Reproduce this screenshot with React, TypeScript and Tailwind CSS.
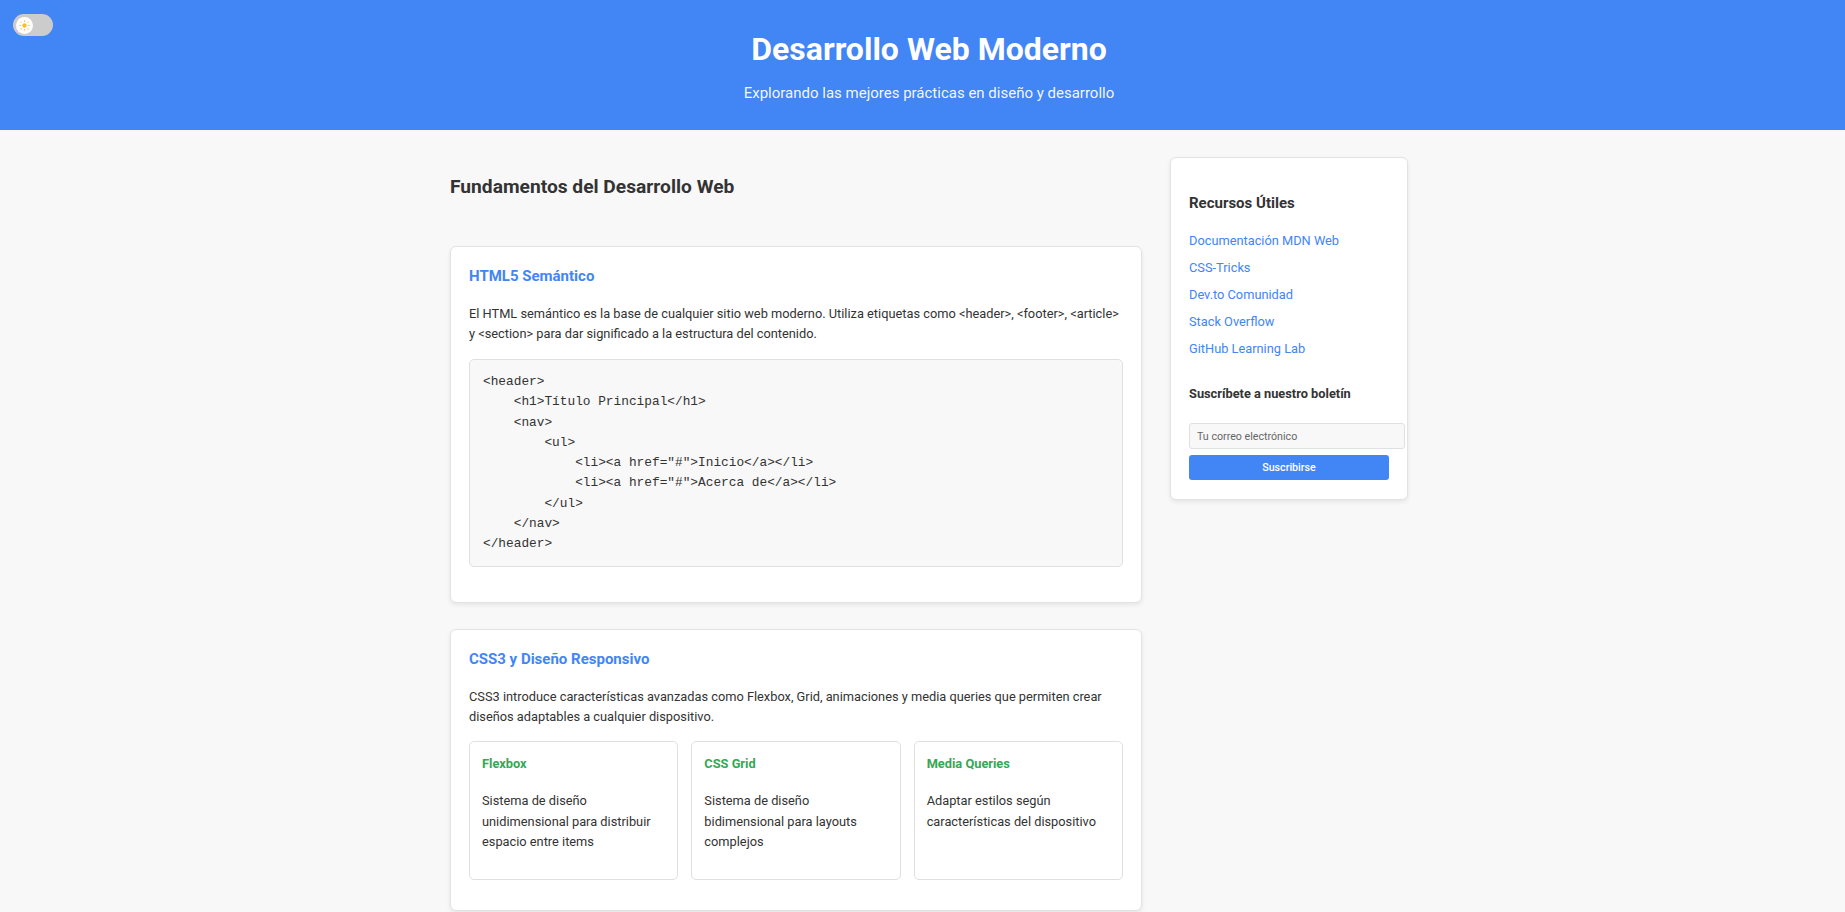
const codeSample = `<header>
    <h1>Título Principal</h1>
    <nav>
        <ul>
            <li><a href="#">Inicio</a></li>
            <li><a href="#">Acerca de</a></li>
        </ul>
    </nav>
</header>`

const features = [
	{ title: 'Flexbox', text: 'Sistema de diseño unidimensional para distribuir espacio entre items' },
	{ title: 'CSS Grid', text: 'Sistema de diseño bidimensional para layouts complejos' },
	{ title: 'Media Queries', text: 'Adaptar estilos según características del dispositivo' },
]

const links = ['Documentación MDN Web', 'CSS-Tricks', 'Dev.to Comunidad', 'Stack Overflow', 'GitHub Learning Lab']

function SunIcon() {
	return (
		<svg viewBox="0 0 12 12" className="w-[11px] h-[11px]" fill="#f6c21c">
			<circle cx="6" cy="6" r="2.4" />
			<rect x="5.4" y="0.3" width="1.2" height="2" rx="0.5" />
			<rect x="5.4" y="9.7" width="1.2" height="2" rx="0.5" />
			<rect x="0.3" y="5.4" width="2" height="1.2" rx="0.5" />
			<rect x="9.7" y="5.4" width="2" height="1.2" rx="0.5" />
			<circle cx="2.2" cy="2.2" r="0.7" />
			<circle cx="9.8" cy="2.2" r="0.7" />
			<circle cx="2.2" cy="9.8" r="0.7" />
			<circle cx="9.8" cy="9.8" r="0.7" />
		</svg>
	)
}

function ThemeToggle() {
	return (
		<button
			type="button"
			className="absolute top-[14px] left-[13px] w-[40px] h-[22px] rounded-full bg-[#cccccc] flex items-center pl-[3px]"
		>
			<span className="w-[17px] h-[17px] rounded-full bg-white flex items-center justify-center">
				<SunIcon />
			</span>
		</button>
	)
}

function Card({ children, className = '' }: { children: React.ReactNode, className?: string }) {
	return (
		<article className={`bg-white border border-[#e3e3e3] rounded-[6px] shadow-[0_2px_4px_rgba(0,0,0,0.08)] px-[18px] ${className}`}>
			{ children }
		</article>
	)
}

export default function App() {
	return (
		<div className="min-h-screen bg-[#f8f8f8] text-[#333] font-['Roboto','Liberation_Sans',sans-serif]">
			<header className="relative bg-[#4285f4] h-[130px] flex flex-col items-center pl-[13px] text-white">
				<ThemeToggle />
				<h1 className="mt-[29px] text-[32px] leading-[40px] font-bold">Desarrollo Web Moderno</h1>
				<p className="mt-[12px] text-[15px] leading-[24px] text-white/95">Explorando las mejores prácticas en diseño y desarrollo</p>
			</header>

			<div className="mx-auto w-[971px] pl-[13px] flex items-start gap-[28px]">
				<main className="w-[692px] shrink-0">
					<h2 className="mt-[42px] text-[19.2px] leading-[30px] font-bold">Fundamentos del Desarrollo Web</h2>

					<Card className="mt-[44px] pt-[17px] pb-[22px]">
						<h3 className="text-[15px] leading-[24px] font-bold text-[#4285f4]">HTML5 Semántico</h3>
						<p className="mt-[16px] text-[12.8px] leading-[20px]">
							El HTML semántico es la base de cualquier sitio web moderno. Utiliza etiquetas como &lt;header&gt;, &lt;footer&gt;, &lt;article&gt; y &lt;section&gt; para dar significado a la estructura del contenido.
						</p>
						<pre className="mt-[15px] mb-[13px] bg-[#f8f8f8] border border-[#e0e0e0] rounded-[5px] px-[13px] py-[12px] font-['Liberation_Mono','Courier_New',monospace] text-[12.8px] leading-[20.25px] text-[#333]">{ codeSample }</pre>
					</Card>

					<Card className="mt-[26px] pt-[17px] pb-[30px]">
						<h3 className="text-[15px] leading-[24px] font-bold text-[#4285f4]">CSS3 y Diseño Responsivo</h3>
						<p className="mt-[16px] text-[12.8px] leading-[20px]">
							CSS3 introduce características avanzadas como Flexbox, Grid, animaciones y media queries que permiten crear diseños adaptables a cualquier dispositivo.
						</p>
						<div className="mt-[14px] grid grid-cols-3 gap-[13px]">
							{
								features.map((feature) => (
									<div key={feature.title} className="border border-[#e0e0e0] rounded-[5px] px-[12px] pt-[12px] pb-[14px]">
										<h4 className="text-[12.8px] leading-[20px] font-bold text-[#34a853]">{ feature.title }</h4>
										<p className="mt-[17px] mb-[12px] text-[12.8px] leading-[20.5px]">{ feature.text }</p>
									</div>
								))
							}
						</div>
					</Card>
				</main>

				<aside className="w-[238px] shrink-0 mt-[27px] bg-white border border-[#e3e3e3] rounded-[6px] shadow-[0_2px_4px_rgba(0,0,0,0.08)] px-[18px] pt-[18px] pb-[19px]">
					<h3 className="mt-[16px] text-[15px] leading-[22px] font-bold">Recursos Útiles</h3>
					<ul className="mt-[17px] flex flex-col gap-[7px]">
						{
							links.map((link) => (
								<li key={link} className="text-[12.8px] leading-[20px]">
									<a href="#" className="text-[#4285f4]">{ link }</a>
								</li>
							))
						}
					</ul>
					<h4 className="mt-[25px] text-[12.8px] leading-[20px] font-bold">Suscríbete a nuestro boletín</h4>
					<input
						type="email"
						placeholder="Tu correo electrónico"
						className="mt-[19px] block box-content w-[200px] h-[24px] px-[7px] bg-[#f8f8f8] border border-[#e0e0e0] rounded-[3px] text-[10.67px] placeholder:text-[#666] outline-none"
					/>
					<button type="button" className="mt-[6px] block w-[200px] h-[25px] rounded-[3px] bg-[#4285f4] text-white text-[10.67px] font-medium">
						Suscribirse
					</button>
				</aside>
			</div>
		</div>
	)
}
